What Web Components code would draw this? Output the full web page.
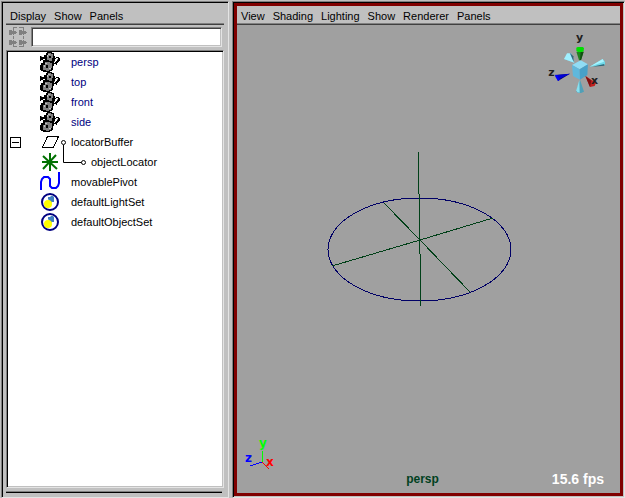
<!DOCTYPE html>
<html lang="en">
<head>
<meta charset="utf-8">
<title>Outliner and persp view</title>
<style>
  body {
    margin: 0;
    background: #c0c0c0;
    color: #000;
    font: 11px/20px "Liberation Sans", Arial, sans-serif;
  }
</style>
</head>
<body>
<maya-workspace>
  <outliner-panel slot="side">
    <menu-bar slot="menu" label="Outliner" items="Display,Show,Panels"></menu-bar>
    <outliner-row icon="camera" tone="camera">persp</outliner-row>
    <outliner-row icon="camera" tone="camera">top</outliner-row>
    <outliner-row icon="camera" tone="camera">front</outliner-row>
    <outliner-row icon="camera" tone="camera">side</outliner-row>
    <outliner-row icon="transform" link="parent" expandable>locatorBuffer</outliner-row>
    <outliner-row icon="locator" link="child">objectLocator</outliner-row>
    <outliner-row icon="curve">movablePivot</outliner-row>
    <outliner-row icon="set">defaultLightSet</outliner-row>
    <outliner-row icon="set">defaultObjectSet</outliner-row>
  </outliner-panel>
  <view-panel slot="main">
    <menu-bar slot="menu" label="View panel" items="View,Shading,Lighting,Show,Renderer,Panels"></menu-bar>
    <scene-view></scene-view>
    <view-compass></view-compass>
    <view-axis></view-axis>
    <span slot="camera">persp</span>
    <span slot="rate">15.6 fps</span>
  </view-panel>
</maya-workspace>

<script>
class BaseElement extends HTMLElement {
  constructor() {
    super();
    this.attachShadow({ mode: "open" });
  }

  connectedCallback() {
    const template = document.createElement("template");
    template.innerHTML = this.render();
    this.shadowRoot.replaceChildren(template.content.cloneNode(true));
  }
}

class MayaWorkspace extends BaseElement {
  render() {
    return `
<style>
  :host {
    display: grid;
    grid-template-columns: 228px minmax(0, 1fr);
    gap: 3px;
    box-sizing: border-box;
    height: 100vh;
    padding: 1px 0 0 1px;
  }
</style>
<slot name="side"></slot>
<slot name="main"></slot>`;
  }
}

class MenuBar extends BaseElement {
  render() {
    const items = this.getAttribute("items").split(",");
    return `
<style>
  :host {
    display: block;
    border-bottom: 1px solid #404040;
    box-shadow: inset 0 -1px #808080;
  }
  nav {
    display: flex;
    gap: 8px;
    height: 18px;
    padding: 0 4px;
    align-items: center;
  }
  button {
    margin: 0;
    padding: 2px 0 0;
    border: 0;
    background: none;
    color: #000;
    font: 11px/16px "Liberation Sans", Arial, sans-serif;
  }
</style>
<nav aria-label="${this.getAttribute("label")}">
  ${items.map(item => `<button type="button">${item}</button>`).join("")}
</nav>`;
  }
}

class OutlinerPanel extends BaseElement {
  render() {
    return `
<style>
  :host {
    display: flex;
    flex-direction: column;
    box-sizing: border-box;
    padding: 4px 4px 0 4px;
    border: 1px solid;
    border-color: #808080 #e4e4e4 #e4e4e4 #808080;
    box-shadow: inset 1px 1px #000;
  }
  .filter {
    display: flex;
    gap: 3px;
    padding: 2px;
  }
  .filter svg { flex: none; }
  input {
    flex: 1;
    min-width: 0;
    height: 20px;
    box-sizing: border-box;
    margin: 0;
    padding: 0 2px;
    border: 1px solid;
    border-color: #808080 #e4e4e4 #e4e4e4 #808080;
    border-radius: 0;
    box-shadow: inset 1px 1px #404040, inset -1px -1px #c0c0c0;
    background: #fff;
    font: inherit;
    outline: 0;
  }
  .list {
    flex: 1;
    overflow: hidden;
    padding: 1px;
    border: 1px solid;
    border-color: #808080 #e4e4e4 #e4e4e4 #808080;
    box-shadow: inset 1px 1px #000, inset -1px -1px #c0c0c0;
    background: #fff;
  }
  .foot {
    height: 5px;
    margin: 3px 2px 0 0;
    border-top: 1px solid #808080;
    box-shadow: inset 0 1px #000;
  }
</style>
<slot name="menu"></slot>
<div class="filter">
  <svg width="20" height="21" viewBox="0 0 20 21" shape-rendering="crispEdges" aria-hidden="true">
    <defs><path id="plug" d="M0 0h3v1h1v-1h1v1h2v1h1v1h-1v1h-2v1h-1v-1h-1v1h-3z"/></defs>
    <g fill="#808080">
      <use href="#plug" x="1" y="3"/><use href="#plug" x="11" y="3"/>
      <use href="#plug" x="1" y="13"/><use href="#plug" x="11" y="13"/>
    </g>
    <path d="M5.500 3v-2.500h3M11 .5h4.500v2.500M5.500 9v3M15.500 9v3M5.500 18v1.500h3M11 19.500h4.500v-1.500" fill="none" stroke="#808080"/>
  </svg>
  <input type="text" aria-label="Filter by name">
</div>
<div class="list" role="tree" aria-label="Scene nodes"><slot></slot></div>
<div class="foot"></div>`;
  }
}

const icons = {
  camera: `
    <path fill="#000" d="M7 0h5v1h2v3h1v2h1v-1h3v1h1v3h-1v1h-1v1h-1v2h-1v-1h-2v2h-1v4h-1v1h-2v1h-7v-1h-2v-1h-1v-5h1v-2h2v-3h-2v1h-2v-2h-1v-3h3v1h3v-2h2z"/>
    <path fill="#808080" d="M8 1h3v1h2v4h-1v3h-3v-1h-2v-5h1z"/>
    <path fill="#808080" d="M5 10h5v1h2v5h-1v2h-2v1h-3v-1h-3v-5h2z"/>
    <path fill="#c0c0c0" d="M8 2h2v1h-2zM7 3h1v2h-1zM5 11h2v1h-2zM4 13h1v2h-1zM9 16h2v1h-2z"/>
    <path fill="#000" d="M9 4h2v2h-2zM6 13h2v3h-2z"/>
    <path fill="#fff" d="M15 7h1v-1h2v2h-1v1h-1v1h-1v1h-1v-2h1zM3 7h2v1h-2z"/>
    <path fill="#808080" d="M14 9h1v1h-1zM17 7h1v1h-1zM1 4h1v1h-1z"/>`,
  transform: `<path fill="#fff" stroke="#000" d="M7.500 4.500h11l-5 11h-11z"/>`,
  locator: `<path fill="none" stroke="#007000" stroke-width="2" d="M10 1v18M2 10h16M3 4l14 13M16 3l-13 14"/>`,
  curve: `<path fill="none" stroke="#0000ff" stroke-width="2" d="M1 18v-8l1-3 2-2h4l2 2v7l2 2h4l2-2 1-3v-11"/>`,
  set: `
    <circle cx="10" cy="10" r="8" fill="#fff" stroke="#000080" stroke-width="2"/>
    <path fill="#4080c0" d="M8 5h2l1-1h2l1 1v5h-2l-1 1-3-4z"/>
    <circle cx="8" cy="12" r="4" fill="#ffff00"/>`
};

const links = {
  parent: `<circle cx="3.500" cy="10.500" r="2"/><path d="M3.500 13v7"/>`,
  child: `<path d="M3.500 0v10.500h18"/><circle cx="23.500" cy="10.500" r="2"/>`
};

class OutlinerRow extends BaseElement {
  connectedCallback() {
    this.setAttribute("role", "treeitem");
    super.connectedCallback();
  }

  render() {
    const icon = this.getAttribute("icon");
    const link = this.getAttribute("link");
    const crisp = icon === "camera" || icon === "transform" ? "crispEdges" : "auto";
    return `
<style>
  :host {
    display: grid;
    grid-template-columns: 32px 20px auto 1fr;
    height: 20px;
    align-items: center;
    white-space: nowrap;
  }
  :host([tone="camera"]) { color: #000080; }
  svg { display: block; }
  .link { width: 11px; }
  .link.child { width: 31px; }
  button {
    display: block;
    width: 11px;
    height: 11px;
    margin: 1px 0 0 2px;
    padding: 0;
    border: 1px solid #000;
    border-radius: 0;
    background: linear-gradient(#000, #000) center / 7px 1px no-repeat #fff;
  }
</style>
<div>${this.hasAttribute("expandable") ? `<button type="button" aria-label="Collapse" aria-expanded="true"></button>` : ""}</div>
<svg width="20" height="20" viewBox="0 0 20 20" shape-rendering="${crisp}" aria-hidden="true">${icons[icon]}</svg>
<div class="link ${link || ""}">
  ${link ? `<svg width="${link === "child" ? 31 : 11}" height="20" fill="none" stroke="#000" aria-hidden="true">${links[link]}</svg>` : ""}
</div>
<span><slot></slot></span>`;
  }
}

class ViewPanel extends BaseElement {
  render() {
    return `
<style>
  :host {
    display: flex;
    box-sizing: border-box;
    padding: 1px;
    border: 1px solid;
    border-color: #808080 #e4e4e4 #e4e4e4 #808080;
    box-shadow: inset 1px 1px #000;
  }
  .frame {
    flex: 1;
    min-width: 0;
    display: flex;
    flex-direction: column;
    border: 3px solid #800000;
  }
  .view {
    position: relative;
    flex: 1;
    min-height: 0;
    background: #a0a0a0;
  }
  .camera, .rate {
    position: absolute;
    bottom: 4px;
    font-weight: bold;
  }
  .camera {
    left: 0;
    right: 12px;
    text-align: center;
    font-size: 12px;
    color: #004020;
  }
  .rate {
    right: 16px;
    font-size: 14px;
    color: #fff;
  }
</style>
<div class="frame">
  <slot name="menu"></slot>
  <div class="view">
    <slot></slot>
    <div class="camera"><slot name="camera"></slot></div>
    <div class="rate"><slot name="rate"></slot></div>
  </div>
</div>`;
  }
}

class SceneView extends BaseElement {
  render() {
    return `
<style>
  :host { position: absolute; inset: 0; }
  svg { display: block; width: 100%; height: 100%; }
</style>
<svg viewBox="0 0 383 468" fill="none" shape-rendering="crispEdges" role="img" aria-label="Circle with locator">
  <ellipse cx="182.500" cy="224.500" rx="91.500" ry="51.500" stroke="#000066"/>
  <g stroke="#004018">
    <path d="M181.500 127v42M182.500 169v60M183.500 229v52"/>
    <path d="M147 178l36 37 50 52M95 241l88-26 73-22"/>
  </g>
</svg>`;
  }
}

class ViewCompass extends BaseElement {
  render() {
    return `
<style>
  :host { position: absolute; top: 0; right: 10px; }
  svg { display: block; }
  text { font: bold 33px "DejaVu Sans", Verdana, sans-serif; }
</style>
<svg width="65" height="75" viewBox="45 0 195 225" role="img" aria-label="View compass">
  <path fill="#70c8e0" d="M102 102l21-19 10 30z"/>
  <path fill="#a0f0ff" d="M102 102l9-17 8 0 14 28z"/>
  <path fill="#306878" d="M120 84l10 10 1 17z"/>
  <path fill="#208020" d="M139 80h22l-8 26h-6z"/>
  <path fill="#105010" d="M152 80h9l-8 26h-3z"/>
  <path fill="#00e000" d="M139 68l4-2h15l4 3-1 9-5 3h-12l-5-4z"/>
  <path fill="#70d8e8" d="M179 125l39-23 7 8 0 10z"/>
  <path fill="#a8f4ff" d="M179 125l39-23 4 8z"/>
  <path fill="#306878" d="M187 125l36-8v5z"/>
  <path fill="#000070" d="M120 146l-44 4 8 18z"/>
  <path fill="#0000d8" d="M120 146l-39 4 7 12z"/>
  <path fill="#0000ff" d="M76 149l6 1 8 14-6 4-8-13z"/>
  <path fill="#c02020" d="M166 153l32 20-4 10-14 3z"/>
  <path fill="#801010" d="M166 153l18 14-4 19z"/>
  <path fill="#50a0b8" d="M150 164l12 36-9 4h-9l-5-5z"/>
  <path fill="#88e0f0" d="M148 165l1 38-7-1-3-6z"/>
  <path fill="#90dcf4" d="M126 120l26-14 22 12-25 15z"/>
  <path fill="#60b8dc" d="M126 120l23 13 1 31-21-11z"/>
  <path fill="#48a0c8" d="M149 133l25-15-2 32-22 14z"/>
  <g fill="#202020">
    <text x="138" y="48" font-style="italic">y</text>
    <text x="55" y="153">z</text>
    <text x="183" y="177">x</text>
  </g>
</svg>`;
  }
}

class ViewAxis extends BaseElement {
  render() {
    return `
<style>
  :host { position: absolute; left: 5px; bottom: 15px; }
  svg { display: block; }
  text { font: bold 12px "DejaVu Sans", Verdana, sans-serif; }
</style>
<svg width="36" height="48" viewBox="0 -10 36 48" shape-rendering="crispEdges" role="img" aria-label="World axis">
  <path d="M20.500 11v11" stroke="#00ff00"/>
  <path d="M20 22l-12 4" stroke="#0000ff"/>
  <path d="M20 22l7 7" stroke="#ff0000"/>
  <text x="17" y="7" fill="#00ff00">y</text>
  <text x="3" y="22" fill="#0000ff">z</text>
  <text x="24" y="26" fill="#ff0000">x</text>
</svg>`;
  }
}

customElements.define("maya-workspace", MayaWorkspace);
customElements.define("menu-bar", MenuBar);
customElements.define("outliner-panel", OutlinerPanel);
customElements.define("outliner-row", OutlinerRow);
customElements.define("view-panel", ViewPanel);
customElements.define("scene-view", SceneView);
customElements.define("view-compass", ViewCompass);
customElements.define("view-axis", ViewAxis);
</script>
</body>
</html>
